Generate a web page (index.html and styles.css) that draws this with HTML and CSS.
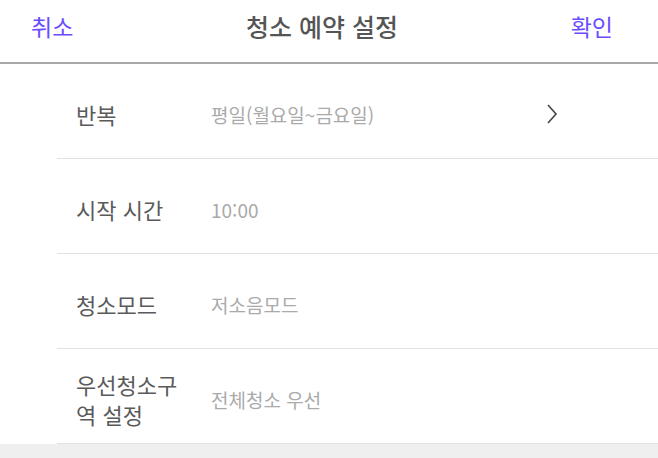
FILE: index.html
```html
<!DOCTYPE html>
<html lang="ko">
<head>
  <meta charset="UTF-8" />
  <meta name="viewport" content="width=device-width, initial-scale=1.0"/>
  <title>청소 예약 설정</title>
  <link rel="stylesheet" href="styles.css">
</head>
<body>
  <div class="header">
    <span class="header-btn">취소</span>
    <span class="header-title">청소 예약 설정</span>
    <span class="header-btn">확인</span>
  </div>

  <div class="list">
    <div class="row">
      <span class="row-label">반복</span>
      <span class="row-value">평일(월요일~금요일)</span>
      <svg class="chevron" width="12" height="20" viewBox="0 0 12 20">
        <path d="M2 1 L10 10 L2 19" fill="none" stroke="#444" stroke-width="1.6"/>
      </svg>
    </div>
    <div class="row">
      <span class="row-label">시작 시간</span>
      <span class="row-value">10:00</span>
    </div>
    <div class="row">
      <span class="row-label">청소모드</span>
      <span class="row-value">저소음모드</span>
    </div>
    <div class="row">
      <span class="row-label">우선청소구<br>역 설정</span>
      <span class="row-value">전체청소 우선</span>
    </div>
  </div>
</body>
</html>
```

FILE: styles.css
```css
body {
  margin: 0;
  padding: 0;
  background: #efefef;
  font-family: "Noto Sans CJK KR", "Noto Sans", sans-serif;
}

.header {
  display: flex;
  align-items: center;
  justify-content: space-between;
  height: 64px;
  padding: 0 45px 10px 31px;
  box-sizing: border-box;
  background: white;
  border-bottom: 2px solid #a8a8a8;
}

.header-btn {
  font-size: 23px;
  color: #6a4dff;
}

.header-title {
  font-size: 25px;
  font-weight: 500;
  color: #555;
}

.list {
  background: white;
}

.row {
  display: flex;
  align-items: center;
  height: 95px;
  margin-left: 57px;
  padding-left: 19px;
  padding-top: 6px;
  box-sizing: border-box;
  border-bottom: 1px solid #e2e2e2;
}

.row-label {
  width: 135px;
  font-size: 22px;
  line-height: 30px;
  color: #5a5a5a;
}

.row-value {
  flex-grow: 1;
  font-size: 19px;
  color: #aaa;
}

.chevron {
  margin-right: 100px;
}
```
